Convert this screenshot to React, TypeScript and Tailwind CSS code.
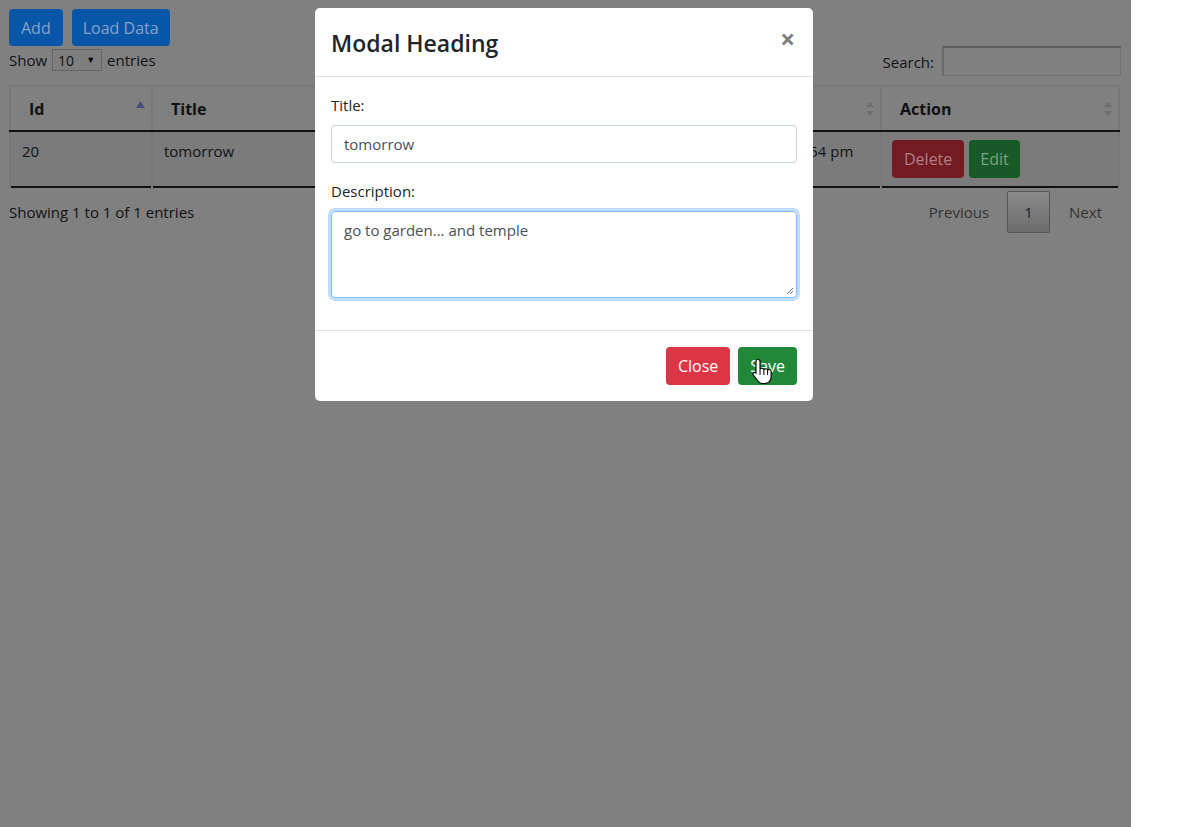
import React from "react";

const font = { fontFamily: '"Open Sans", "Noto Sans", sans-serif' };

function SortBoth() {
  return (
    <svg width="8" height="16" viewBox="0 0 8 16" className="shrink-0">
      <path d="M4 1 L8 6 L0 6 Z" fill="#6e6e6e" />
      <path d="M4 15 L8 10 L0 10 Z" fill="#6e6e6e" />
    </svg>
  );
}

function SortAsc() {
  return (
    <svg width="9" height="8" viewBox="0 0 9 8" className="shrink-0">
      <path d="M4.5 0 L9 7 L0 7 Z" fill="#4d4a80" />
    </svg>
  );
}

function HandCursor() {
  return (
    <svg width="22" height="26" viewBox="0 0 22 26">
      <path
        d="M6 1.5c1.1 0 2 .9 2 2v8.2c.3-.9 1-1.4 1.9-1.4 1 0 1.8.7 1.9 1.7.3-.8 1-1.3 1.9-1.3 1 0 1.8.8 1.9 1.8.3-.6.9-1 1.6-1 1.1 0 1.9.9 1.9 2v5.5c0 3.7-2.6 6.5-6.2 6.5h-2.4c-2.3 0-3.6-1-4.8-2.8L1.4 17.2c-.6-.9-.4-2 .4-2.6.8-.6 1.9-.4 2.5.4L4 15.2V3.5c0-1.1.9-2 2-2z"
        fill="#fff"
        stroke="#000"
        strokeWidth="1.1"
      />
      <path d="M11.9 12v5M15.6 12.6v4.4M8 11.7v5.3" stroke="#000" strokeWidth="1" />
    </svg>
  );
}

export default function App() {
  return (
    <div className="flex w-[1180px] h-[827px] bg-white overflow-hidden" style={font}>
      <div className="relative w-[1131px] h-[827px] bg-[#808080] text-[15px] text-[#111214]">
        {/* page */}
        <div className="px-[9px] pt-[9px]">
          <div className="flex gap-[9px]">
            <div className="h-[37px] px-[12px] rounded-[4px] bg-[#0856a8] text-[#87a3c8] flex items-center text-[16px]">Add</div>
            <div className="h-[37px] px-[11px] rounded-[4px] bg-[#0856a8] text-[#87a3c8] flex items-center text-[16px]">Load Data</div>
          </div>
          <div className="flex justify-between items-end">
            <div className="flex items-center h-[26px] -mt-[1px] mb-[2px]">
              <span>Show</span>
              <div className="ml-[5px] w-[50px] h-[22px] border border-[#666] bg-[#7e7e7e] flex items-center justify-between pl-[5px] pr-[6px] text-[14px]">
                <span>10</span>
                <span className="text-[9px] text-black">▼</span>
              </div>
              <span className="ml-[5px]">entries</span>
            </div>
            <div className="flex items-center gap-[8px] mb-[-1px] mr-[1px]">
              <span className="mt-[2px]">Search:</span>
              <div className="w-[179px] h-[30px] border border-[#727272] border-t-2 border-t-[#5c5c5c] border-l-2 border-l-[#6a6a6a]" />
            </div>
          </div>
          <table className="mt-[10px] w-[1109px] table-fixed border-collapse">
            <colgroup>
              <col className="w-[142px]" />
              <col className="w-[289px]" />
              <col className="w-[253px]" />
              <col className="w-[187px]" />
              <col className="w-[238px]" />
            </colgroup>
            <thead>
              <tr className="h-[45px]">
                {[
                  ["Id", "asc"],
                  ["Title", "both"],
                  ["Description", "both"],
                  ["Date", "both"],
                  ["Action", "both"],
                ].map(([t, s]) => (
                  <th
                    key={t}
                    className="border-2 border-[#777] border-b-2 border-b-[#111] pl-[18px] pr-[6px] pt-[1px] text-left font-bold text-[16px] text-[#111]"
                  >
                    <div className="flex items-center justify-between">
                      <span>{t}</span>
                      {s === "asc" ? <div className="-mt-[8px]"><SortAsc /></div> : <SortBoth />}
                    </div>
                  </th>
                ))}
              </tr>
            </thead>
            <tbody>
              <tr className="h-[56px] bg-[#7b7b7b] align-top border-b-2 border-b-[#111]">
                <td className="border-x-2 border-[#777] pl-[11px] pt-[8px]">20</td>
                <td className="border-x-2 border-[#777] pl-[11px] pt-[8px]">tomorrow</td>
                <td className="border-x-2 border-[#777] pl-[11px] pt-[8px]">go to garden... and temple</td>
                <td className="border-x-2 border-[#777] pl-[11px] pt-[8px] whitespace-nowrap">20-12-2019 12:54 pm</td>
                <td className="border-x-2 border-[#777] pl-[10px] pt-[8px]">
                  <div className="flex gap-[5px]">
                    <div className="h-[38px] px-[12px] rounded-[4px] bg-[#741a23] text-[#b07f84] flex items-center text-[16px]">Delete</div>
                    <div className="h-[38px] px-[11px] rounded-[4px] bg-[#175a28] text-[#7aa184] flex items-center text-[16px]">Edit</div>
                  </div>
                </td>
              </tr>
            </tbody>
          </table>
          <div className="flex justify-between items-center w-[1109px] mt-[3px]">
            <span>Showing 1 to 1 of 1 entries</span>
            <div className="flex items-center text-[#333]">
              <span className="px-[18px]">Previous</span>
              <div className="w-[43px] h-[42px] border border-[#555] rounded-[2px] bg-gradient-to-b from-[#8a8a8a] to-[#6c6c6c] flex items-center justify-center text-[#222]">1</div>
              <span className="pl-[19px] pr-[16px]">Next</span>
            </div>
          </div>
        </div>

        {/* modal */}
        <div className="absolute left-[315px] top-[8px] w-[498px] bg-white rounded-[5px] text-[#212529]">
          <div className="flex items-start justify-between px-[16px] pt-[17px] pb-[15px] border-b border-[#dee2e6]">
            <h4 className="text-[23px] leading-[36px] font-semibold text-[#212529]">Modal Heading</h4>
            <span className="text-[26px] leading-[26px] font-bold text-[#7d7d7d] mt-[1px] mr-[2px]">×</span>
          </div>
          <div className="p-[16px]">
            <div className="mb-[16px]">
              <div className="text-[15px] leading-[24px] mb-[8px]">Title:</div>
              <div className="h-[38px] border border-[#ced4da] rounded-[4px] px-[12px] flex items-center text-[15px] text-[#495057] pt-[1px]">tomorrow</div>
            </div>
            <div className="mb-[16px]">
              <div className="text-[15px] leading-[24px] mb-[8px]">Description:</div>
              <div className="relative h-[87px] border border-[#80bdff] rounded-[4px] px-[12px] py-[6px] text-[15px] leading-[24px] text-[#495057] shadow-[0_0_0_3px_rgba(0,123,255,0.25)]">
                go to garden... and temple
                <svg width="8" height="8" viewBox="0 0 8 8" className="absolute right-[2px] bottom-[2px]">
                  <path d="M7 1 L1 7 M7 4 L4 7" stroke="#777" strokeWidth="1" />
                </svg>
              </div>
            </div>
          </div>
          <div className="flex justify-end gap-[8px] px-[16px] py-[16px] border-t border-[#dee2e6]">
            <div className="h-[38px] px-[12px] rounded-[4px] bg-[#dc3545] text-white flex items-center text-[16px]">Close</div>
            <div className="relative h-[38px] px-[12px] rounded-[4px] bg-[#218838] text-white flex items-center text-[16px]">
              Save
              <div className="absolute left-[14px] top-[11px]">
                <HandCursor />
              </div>
            </div>
          </div>
        </div>
      </div>
    </div>
  );
}
